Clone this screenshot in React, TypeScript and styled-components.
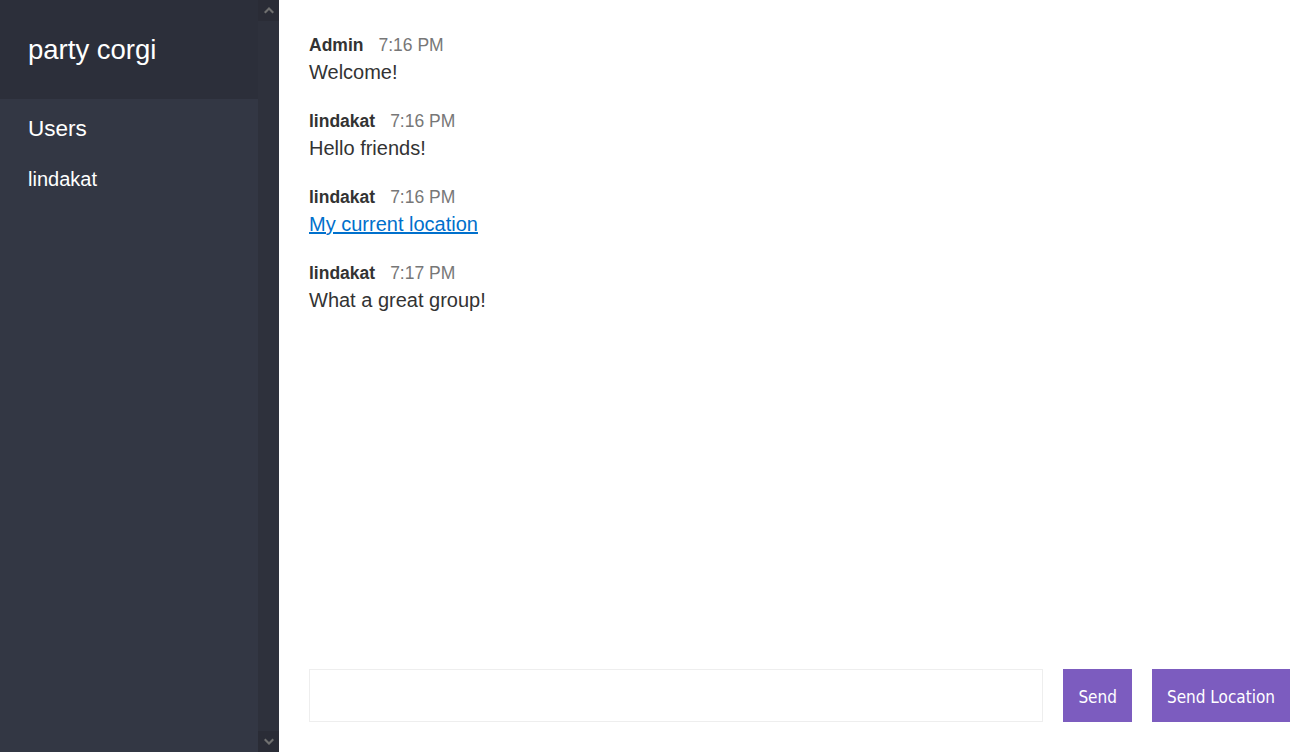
import React from "react";
import styled, { createGlobalStyle } from "styled-components";

const GlobalStyle = createGlobalStyle`
  html, body, #root { margin: 0; padding: 0; height: 100%; }
  body {
    font-family: "Liberation Sans", Arial, Helvetica, sans-serif;
    color: #333333;
    background: #ffffff;
  }
  * { box-sizing: border-box; }
`;

const Layout = styled.div`
  display: flex;
  height: 100vh;
  overflow: hidden;
`;

const Sidebar = styled.aside`
  display: flex;
  flex-shrink: 0;
  width: 279px;
  height: 100%;
  background: #333744;
  color: #ffffff;
`;

const SidebarContent = styled.div`
  flex: 1;
  display: flex;
  flex-direction: column;
`;

const RoomTitle = styled.h2`
  margin: 0;
  padding: 30px 28px;
  height: 99px;
  font-size: 27.5px;
  line-height: 39px;
  font-weight: 400;
  background: #2c2f3a;
`;

const ListTitle = styled.h3`
  margin: 0 0 5px;
  padding: 15px 28px 0;
  font-size: 22.5px;
  line-height: 29px;
  font-weight: 400;
`;

const UserList = styled.ul`
  list-style: none;
  margin: 0;
  padding: 17px 28px 0;
  font-size: 20px;
  line-height: 28px;
  font-weight: 400;
`;

const ScrollRail = styled.div`
  width: 21px;
  flex-shrink: 0;
  display: flex;
  flex-direction: column;
  justify-content: space-between;
  background: #2e313c;
`;

const RailButton = styled.div`
  height: 21px;
  display: flex;
  align-items: center;
  justify-content: center;
  background: #2a2c36;
  color: #707070;
`;

const Main = styled.main`
  flex: 1;
  display: flex;
  flex-direction: column;
  height: 100%;
  min-width: 0;
`;

const Messages = styled.div`
  flex: 1;
  overflow: auto;
  padding: 34px 30px 0;
`;

const Message = styled.div`
  margin-bottom: 25px;
`;

const Meta = styled.p`
  margin: 0;
  line-height: 23px;
  font-size: 17.5px;
`;

const Name = styled.span`
  font-weight: 700;
  margin-right: 15px;
  color: #333333;
`;

const Time = styled.span`
  color: #777777;
`;

const Body = styled.p`
  margin: 3px 0 0;
  font-size: 20px;
  line-height: 25px;
  color: #333333;
`;

const Link = styled.a`
  color: #0070cc;
  text-decoration: underline;
`;

const Compose = styled.div`
  display: flex;
  flex-shrink: 0;
  gap: 20px;
  padding: 0 8px 30px 30px;
`;

const Form = styled.form`
  display: flex;
  flex: 1;
  gap: 20px;
  margin: 0;
`;

const Input = styled.input`
  flex: 1;
  height: 53px;
  border: 1px solid #eeeeee;
  padding: 15px;
  font-size: 17.5px;
  outline: none;
  font-family: "Liberation Sans", Arial, sans-serif;
`;

const Button = styled.button`
  height: 53px;
  padding: 2px 15px 0;
  border: none;
  background: #7c5cbf;
  color: #ffffff;
  font-family: "DejaVu Sans Condensed", "DejaVu Sans", sans-serif;
  font-stretch: condensed;
  font-size: 17px;
  cursor: pointer;
  white-space: nowrap;
`;

const Chevron = ({ up }: { up?: boolean }) => (
  <svg width="10" height="7" viewBox="0 0 10 7" fill="currentColor">
    {up ? (
      <path d="M0 5 L5 0 L10 5 L8.5 6.5 L5 3 L1.5 6.5 Z" />
    ) : (
      <path d="M0 2 L5 7 L10 2 L8.5 0.5 L5 4 L1.5 0.5 Z" />
    )}
  </svg>
);

type Msg = { name: string; time: string; text: string; url?: string };

const messages: Msg[] = [
  { name: "Admin", time: "7:16 PM", text: "Welcome!" },
  { name: "lindakat", time: "7:16 PM", text: "Hello friends!" },
  { name: "lindakat", time: "7:16 PM", text: "My current location", url: "#" },
  { name: "lindakat", time: "7:17 PM", text: "What a great group!" },
];

export default function App() {
  return (
    <>
      <GlobalStyle />
      <Layout>
        <Sidebar>
          <SidebarContent>
            <RoomTitle>party corgi</RoomTitle>
            <ListTitle>Users</ListTitle>
            <UserList>
              <li>lindakat</li>
            </UserList>
          </SidebarContent>
          <ScrollRail>
            <RailButton>
              <Chevron up />
            </RailButton>
            <RailButton>
              <Chevron />
            </RailButton>
          </ScrollRail>
        </Sidebar>
        <Main>
          <Messages>
            {messages.map((m, i) => (
              <Message key={i}>
                <Meta>
                  <Name>{m.name}</Name>
                  <Time>{m.time}</Time>
                </Meta>
                <Body>
                  {m.url ? <Link href={m.url}>{m.text}</Link> : m.text}
                </Body>
              </Message>
            ))}
          </Messages>
          <Compose>
            <Form onSubmit={(e) => e.preventDefault()}>
              <Input />
              <Button type="submit">Send</Button>
            </Form>
            <Button type="button">Send Location</Button>
          </Compose>
        </Main>
      </Layout>
    </>
  );
}
